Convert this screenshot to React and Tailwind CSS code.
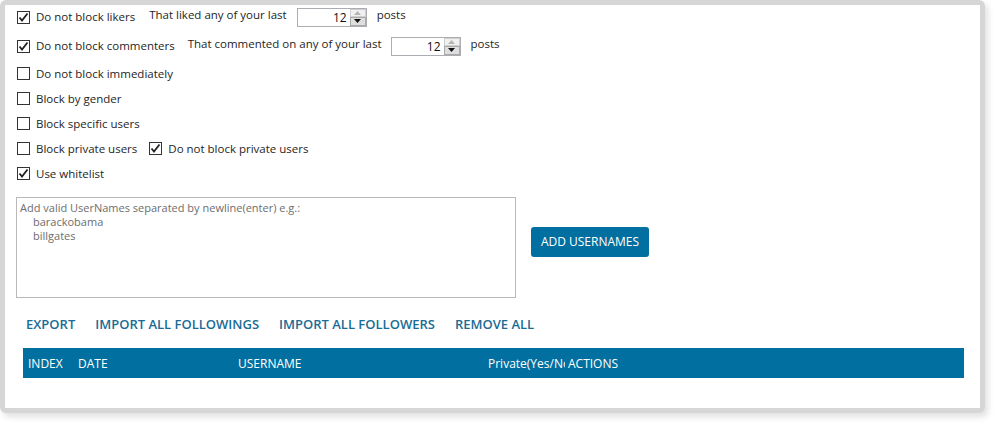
import React from 'react';

const font = { fontFamily: '"Open Sans", "Noto Sans", sans-serif' };

const Check = ({ checked }) => (
    <span className="w-[13px] h-[13px] border border-[#333333] bg-white flex items-center justify-center shrink-0">
        {checked && (
            <svg width="11" height="11" viewBox="0 0 11 11">
                <path d="M1.5 5.5 L4 8.5 L9.5 1.5" fill="none" stroke="#222" strokeWidth="1.8" />
            </svg>
        )}
    </span>
);

const CheckRow = ({ checked, label }) => (
    <label className="flex items-center gap-[6px] text-[11.5px] text-[#1e1e1e]">
        <Check checked={checked} />
        <span>{label}</span>
    </label>
);

const Spinner = ({ value }) => (
    <div className="w-[70px] h-[19px] border border-[#abadb3] bg-white flex">
        <div className="flex-1 text-right pr-[3px] text-[12px] leading-[17px] text-[#111]">{value}</div>
        <div className="w-[16px] flex flex-col">
            <div className="h-[8px] bg-[#f0f0f0] border border-[#cfcfcf] flex items-center justify-center">
                <svg width="7" height="4" viewBox="0 0 7 4"><path d="M0 4 L3.5 0 L7 4 Z" fill="#b5b5b5" /></svg>
            </div>
            <div className="h-[9px] bg-[#dedede] border border-[#a9a9a9] flex items-center justify-center">
                <svg width="7" height="4" viewBox="0 0 7 4"><path d="M0 0 L3.5 4 L7 0 Z" fill="#111" /></svg>
            </div>
        </div>
    </div>
);

const App = () => {
    return (
        <div className="w-[1001px] h-[430px] bg-white overflow-hidden" style={font}>
            <div className="w-[985px] h-[413px] border-[5px] border-[#d6d6d6] rounded-[6px] bg-white shadow-[3px_4px_6px_rgba(0,0,0,0.12)] pl-[12px]">
                <div className="flex items-center h-[20px] mt-[2px]">
                    <CheckRow checked label="Do not block likers" />
                    <span className="ml-[14px] text-[11.5px] text-[#1e1e1e] -mt-[4px]">That liked any of your last</span>
                    <div className="ml-[10px]"><Spinner value="12" /></div>
                    <span className="ml-[10px] text-[11.5px] text-[#1e1e1e] -mt-[4px]">posts</span>
                </div>
                <div className="flex items-center h-[20px] mt-[9px]">
                    <CheckRow checked label="Do not block commenters" />
                    <span className="ml-[13px] text-[11.5px] text-[#1e1e1e] -mt-[4px]">That commented on any of your last</span>
                    <div className="ml-[9px]"><Spinner value="12" /></div>
                    <span className="ml-[10px] text-[11.5px] text-[#1e1e1e] -mt-[4px]">posts</span>
                </div>
                <div className="flex flex-col mt-[5px]">
                    <div className="h-[25px] flex items-center"><CheckRow label="Do not block immediately" /></div>
                    <div className="h-[25px] flex items-center"><CheckRow label="Block by gender" /></div>
                    <div className="h-[25px] flex items-center"><CheckRow label="Block specific users" /></div>
                    <div className="h-[25px] flex items-center gap-[12px]">
                        <CheckRow label="Block private users" />
                        <CheckRow checked label="Do not block private users" />
                    </div>
                    <div className="h-[25px] flex items-center"><CheckRow checked label="Use whitelist" /></div>
                </div>
                <div className="flex items-start mt-[11px]">
                    <div className="-ml-[1px] w-[500px] h-[101px] border border-[#b9b9b9] px-[3px] pt-[3px] text-[11px] leading-[14px] text-[#6d6d6d]">
                        <div>Add valid UserNames separated by newline(enter) e.g.:</div>
                        <div className="pl-[13px]">barackobama</div>
                        <div className="pl-[13px]">billgates</div>
                    </div>
                    <button className="ml-[15px] mt-[30px] w-[118px] h-[30px] bg-[#016f9f] rounded-[3px] text-white text-[12px]">ADD USERNAMES</button>
                </div>
                <div className="flex gap-[20px] mt-[17px] ml-[9px] text-[13px] font-semibold text-[#1a6c94]">
                    <span>EXPORT</span>
                    <span>IMPORT ALL FOLLOWINGS</span>
                    <span>IMPORT ALL FOLLOWERS</span>
                    <span>REMOVE ALL</span>
                </div>
                <div className="mt-[13px] ml-[6px] w-[941px] h-[30px] bg-[#016f9f] flex items-center text-white text-[12px] pl-[5px] pt-[3px]">
                    <span className="w-[50px]">INDEX</span>
                    <span className="w-[160px]">DATE</span>
                    <span className="w-[250px]">USERNAME</span>
                    <span className="w-[77px] overflow-hidden whitespace-nowrap">Private(Yes/No)</span>
                    <span className="ml-[3px]">ACTIONS</span>
                </div>
            </div>
        </div>
    );
};

export default App;
